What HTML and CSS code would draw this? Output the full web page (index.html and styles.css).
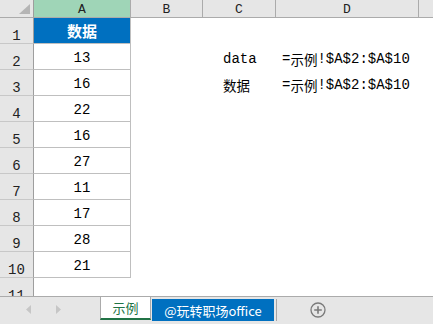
FILE: index.html
```html
<!DOCTYPE html>
<html>
<head>
<meta charset="utf-8">
<link rel="stylesheet" href="styles.css">
</head>
<body>
<div class="sheet">
  <div class="hdr corner"><svg width="12" height="11" viewBox="0 0 12 11"><polygon points="11,0 11,10 0,10" fill="#b5b5b5"/></svg></div>
  <div class="hdr col sel">A</div>
  <div class="hdr col">B</div>
  <div class="hdr col">C</div>
  <div class="hdr col">D</div>
  <div class="hdr col last"></div>

  <div class="rh">1</div><div class="a title">数据</div><div class="c"></div><div class="c"></div><div class="c"></div><div class="c"></div>
  <div class="rh">2</div><div class="a">13</div><div class="c"></div><div class="c lab">data</div><div class="c fx">=<span class="cj">示例</span>!$A$2:$A$10</div><div class="c"></div>
  <div class="rh">3</div><div class="a">16</div><div class="c"></div><div class="c lab"><span class="cj">数据</span></div><div class="c fx">=<span class="cj">示例</span>!$A$2:$A$10</div><div class="c"></div>
  <div class="rh">4</div><div class="a">22</div><div class="c"></div><div class="c"></div><div class="c"></div><div class="c"></div>
  <div class="rh">5</div><div class="a">16</div><div class="c"></div><div class="c"></div><div class="c"></div><div class="c"></div>
  <div class="rh">6</div><div class="a">27</div><div class="c"></div><div class="c"></div><div class="c"></div><div class="c"></div>
  <div class="rh">7</div><div class="a">11</div><div class="c"></div><div class="c"></div><div class="c"></div><div class="c"></div>
  <div class="rh">8</div><div class="a">17</div><div class="c"></div><div class="c"></div><div class="c"></div><div class="c"></div>
  <div class="rh">9</div><div class="a">28</div><div class="c"></div><div class="c"></div><div class="c"></div><div class="c"></div>
  <div class="rh">10</div><div class="a">21</div><div class="c"></div><div class="c"></div><div class="c"></div><div class="c"></div>
  <div class="rh">11</div><div class="c"></div><div class="c"></div><div class="c"></div><div class="c"></div><div class="c"></div>
</div>
<div class="tabbar">
  <div class="nav">
    <svg class="arr" width="6" height="9" viewBox="0 0 6 9"><polygon points="5,0 5,9 0,4.5" fill="#c6c6c6"/></svg>
    <svg class="arr" width="6" height="9" viewBox="0 0 6 9"><polygon points="1,0 1,9 6,4.5" fill="#c6c6c6"/></svg>
  </div>
  <div class="tab active">示例</div>
  <div class="tab blue">@玩转职场office</div>
  <div class="sep"></div>
  <div class="add"><svg width="16" height="16" viewBox="0 0 16 16"><circle cx="8" cy="8" r="7" fill="none" stroke="#7a7a7a" stroke-width="1.3"/><path d="M8 4.2V11.8M4.2 8H11.8" stroke="#7a7a7a" stroke-width="1.6"/></svg></div>
</div>
</body>
</html>
```
FILE: styles.css
```css
html, body {
  margin: 0;
  padding: 0;
  background: #fff;
  overflow: hidden;
}
body {
  width: 433px;
  height: 324px;
  font-family: "Liberation Mono", "Noto Sans CJK SC", monospace;
  font-size: 14px;
  color: #000;
}
.sheet {
  display: grid;
  grid-template-columns: 34px 97px 72px 73px 143px 1fr;
  grid-template-rows: 18px repeat(11, 26px);
  height: 296px;
  overflow: hidden;
}
.sheet > div {
  box-sizing: border-box;
  min-width: 0;
}
.hdr {
  background: #e6e6e6;
  border-bottom: 1px solid #ababab;
  border-right: 1px solid #ababab;
  font-size: 13px;
  line-height: 16px;
  display: flex;
  align-items: center;
  justify-content: center;
  color: #222;
}
.hdr.col { padding-top: 2px; }
.hdr.sel { background: #9fd5b7; }
.hdr.last { border-right: none; }
.corner {
  justify-content: flex-end;
  align-items: flex-end;
  padding: 0 2px 2px 0;
  border-right-color: #9e9e9e;
}
.rh {
  background: #e6e6e6;
  border-right: 1px solid #9e9e9e;
  border-bottom: 1px solid #c8c8c8;
  display: flex;
  align-items: flex-end;
  justify-content: center;
  line-height: 14px;
  color: #222;
}
.a {
  border-right: 1px solid #bfbfbf;
  border-bottom: 1px solid #bfbfbf;
  display: flex;
  align-items: flex-end;
  justify-content: center;
  line-height: 16px;
  padding-bottom: 3px;
}
.a.title {
  background: #0070c0;
  color: #fff;
  font-family: "Noto Sans CJK SC", sans-serif;
  font-weight: bold;
  font-size: 15px;
  align-items: center;
  padding: 1px 0 0;
  line-height: 18px;
}
.c {
  display: flex;
  align-items: flex-end;
  line-height: 16px;
  padding-bottom: 3px;
  white-space: nowrap;
}
.lab { padding-left: 20px; }
.fx { padding-left: 6px; }
.cj {
  font-family: "Noto Sans CJK SC", sans-serif;
  font-size: 13.5px;
}
.tabbar {
  height: 28px;
  box-sizing: border-box;
  border-top: 1px solid #ababab;
  background: #e6e6e6;
  display: flex;
  align-items: flex-start;
  font-family: "Noto Sans CJK SC", sans-serif;
  font-size: 13px;
}
.nav {
  width: 100px;
  height: 24px;
  display: flex;
  align-items: center;
  padding-left: 26px;
  box-sizing: border-box;
  gap: 23px;
}
.tab {
  box-sizing: border-box;
  display: flex;
  align-items: center;
  justify-content: center;
  white-space: nowrap;
}
.tab.active {
  width: 51px;
  height: 23px;
  background: #fff;
  border-left: 1px solid #ababab;
  border-right: 1px solid #ababab;
  border-bottom: 2px solid #217346;
  color: #217346;
}
.tab.blue {
  width: 122px;
  height: 22px;
  margin: 2px 0 0 1px;
  background: #0070c0;
  color: #fff;
}
.sep {
  width: 1px;
  height: 22px;
  margin: 2px 0 0 2px;
  background: #a6a6a6;
}
.add {
  margin: 5px 0 0 33px;
  width: 16px;
  height: 16px;
}
.add svg { display: block; }
```
